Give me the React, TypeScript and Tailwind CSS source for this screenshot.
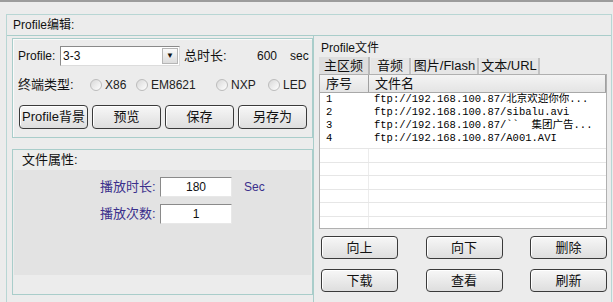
const ui = "font-['Liberation_Sans','Noto_Sans_CJK_SC',sans-serif]";
const mono = "font-['Liberation_Mono','Noto_Sans_CJK_SC',monospace]";

function Btn({ label, className = "" }: { label: string; className?: string }) {
  return (
    <div
      className={`flex items-center justify-center rounded-[4px] border border-[#3a3a3a] bg-gradient-to-b from-[#f7f7f7] to-[#dedede] text-[13px] text-[#111] shadow-[inset_1px_1px_0_#fff] ${className}`}
    >
      {label}
    </div>
  );
}

function Radio({ label, w }: { label: string; w: string }) {
  return (
    <div className={`flex items-center ${w}`}>
      <span className="mr-[3px] h-[12px] w-[12px] rounded-full border border-[#bcbcbc] bg-gradient-to-br from-[#d8d8d8] to-white" />
      <span className="text-[12px] text-[#222]">{label}</span>
    </div>
  );
}

const rows = [
  ["1", "ftp://192.168.100.87/北京欢迎你你..."],
  ["2", "ftp://192.168.100.87/sibalu.avi"],
  ["3", "ftp://192.168.100.87/``  集团广告..."],
  ["4", "ftp://192.168.100.87/A001.AVI"],
];

export default function App() {
  return (
    <div className={`relative h-[302px] w-[613px] overflow-hidden border-t-2 border-[#9c9c9c] bg-[#ececec] ${ui} text-[#111]`}>
      <div className="ml-[6px] mt-[12px] h-[290px] w-[606px] border-l border-t border-r border-[#b8d6d4]">
        <div className="flex h-[21px] items-center border-b border-[#a9cdca] pl-[6px] text-[12px]">
          Profile编辑:
        </div>
        <div className="flex h-[268px]">
          {/* left column */}
          <div className="flex w-[306px] shrink-0 flex-col pl-[5px] pt-[2px]">
            <div className="flex h-[100px] flex-col border border-[#a9cdca] pl-[5px] pt-[7px] shadow-[inset_1px_1px_0_#fafafa]">
              <div className="flex h-[20px] items-center text-[12px]">
                <span className="w-[42px]">Profile:</span>
                <div className="flex h-[20px] w-[120px] items-center border border-t-[#8a8a8a] border-l-[#8a8a8a] border-r-[#dcdcdc] border-b-[#dcdcdc] bg-white">
                  <span className="flex-1 pl-[2px] text-[12px]">3-3</span>
                  <span className="mr-[1px] flex h-[16px] w-[16px] items-center justify-center border border-[#b5b5b5] bg-gradient-to-b from-[#fafafa] to-[#dcdcdc] text-[8px]">
                    ▼
                  </span>
                </div>
                <span className="ml-[4px] w-[73px] text-[13px]">总时长:</span>
                <span className="w-[33px]">600</span>
                <span>sec</span>
              </div>
              <div className="mt-[10px] flex h-[18px] items-center">
                <span className="w-[72px] text-[13px]">终端类型:</span>
                <Radio label="X86" w="w-[46px]" />
                <Radio label="EM8621" w="w-[80px]" />
                <Radio label="NXP" w="w-[52px]" />
                <Radio label="LED" w="w-[40px]" />
              </div>
              <div className="mt-[11px] flex h-[24px] gap-[4px] pl-[1px]">
                <Btn label="Profile背景" className="w-[69px] text-[12px]" />
                <Btn label="预览" className="w-[69px]" />
                <Btn label="保存" className="w-[69px]" />
                <Btn label="另存为" className="w-[69px]" />
              </div>
            </div>
            <div className="mt-[11px] flex h-[146px] flex-col border border-[#a9cdca] px-[1px]">
              <div className="flex h-[20px] items-center pl-[8px] text-[13px]">文件属性:</div>
              <div className="flex h-[105px] flex-col bg-[#e3e3e3] pl-[86px] pt-[7px] text-[13px] text-[#3a2f8c]">
                <div className="flex h-[20px] items-center">
                  <span className="w-[60px]">播放时长:</span>
                  <div className="flex h-[20px] w-[72px] items-center justify-center border border-t-[#8a8a8a] border-l-[#8a8a8a] border-r-[#e8e8e8] border-b-[#e8e8e8] bg-white text-[12px] text-[#111]">
                    180
                  </div>
                  <span className="ml-[12px] text-[12px]">Sec</span>
                </div>
                <div className="mt-[7px] flex h-[20px] items-center">
                  <span className="w-[60px]">播放次数:</span>
                  <div className="flex h-[20px] w-[72px] items-center justify-center border border-t-[#8a8a8a] border-l-[#8a8a8a] border-r-[#e8e8e8] border-b-[#e8e8e8] bg-white text-[12px] text-[#111]">
                    1
                  </div>
                </div>
              </div>
            </div>
          </div>
          {/* right panel */}
          <div className="flex min-w-0 flex-1 flex-col overflow-hidden border-l border-[#a9cdca] pl-[5px] pr-[4px]">
            <div className="flex h-[21px] items-end pl-[2px] text-[12px]">Profile文件</div>
            <div className="flex h-[17px] items-end text-[13px]">
              <div className="flex h-[17px] w-[51px] items-center justify-center border-r-2 border-[#b8b8b8] bg-[#dedede]">主区频</div>
              <div className="ml-[1px] flex h-[16px] w-[40px] items-center justify-center border-r-2 border-[#c2c2c2] bg-[#e6e6e6]">音频</div>
              <div className="ml-[1px] flex h-[16px] w-[67px] items-center justify-center border-r-2 border-[#c2c2c2] bg-[#e6e6e6]">图片/Flash</div>
              <div className="ml-[1px] flex h-[16px] w-[60px] items-center justify-center border-r-2 border-[#c2c2c2] bg-[#e6e6e6]">文本/URL</div>
            </div>
            <div className="flex h-[155px] flex-col overflow-hidden border border-[#b0b0b0] bg-white">
              <div className="flex h-[18px] shrink-0 border-b border-[#a8a8a8] bg-gradient-to-b from-[#f4f4f4] to-[#e4e4e4] text-[13px]">
                <div className="flex w-[49px] items-center border-r border-[#a0a0a0] pl-[6px]">序号</div>
                <div className="flex flex-1 items-center border-r border-[#a0a0a0] pl-[6px]">文件名</div>
              </div>
              <div className="flex h-[55px] shrink-0 flex-col">
                {rows.map(([n, f]) => (
                  <div key={n} className={`flex h-[13px] shrink-0 items-center whitespace-nowrap leading-[13px] ${mono} text-[10.5px] text-black`}>
                    <span className="w-[49px] shrink-0 pl-[6px]">{n}</span>
                    <span className="whitespace-pre pl-[5px]">{f}</span>
                  </div>
                ))}
              </div>
              {[0, 1, 2, 3, 4, 5].map((i) => (
                <div key={i} className="flex h-[13.5px] shrink-0 border-t border-[#e6e6e6]">
                  <span className="w-[49px] border-r border-[#ececec]" />
                </div>
              ))}
            </div>
            <div className="mt-[7px] flex justify-between pl-[2px]">
              <Btn label="向上" className="h-[23px] w-[77px]" />
              <Btn label="向下" className="h-[23px] w-[77px]" />
              <Btn label="删除" className="h-[23px] w-[77px]" />
            </div>
            <div className="mt-[10px] flex justify-between pl-[2px]">
              <Btn label="下载" className="h-[23px] w-[77px]" />
              <Btn label="查看" className="h-[23px] w-[77px]" />
              <Btn label="刷新" className="h-[23px] w-[77px]" />
            </div>
          </div>
        </div>
      </div>
    </div>
  );
}
